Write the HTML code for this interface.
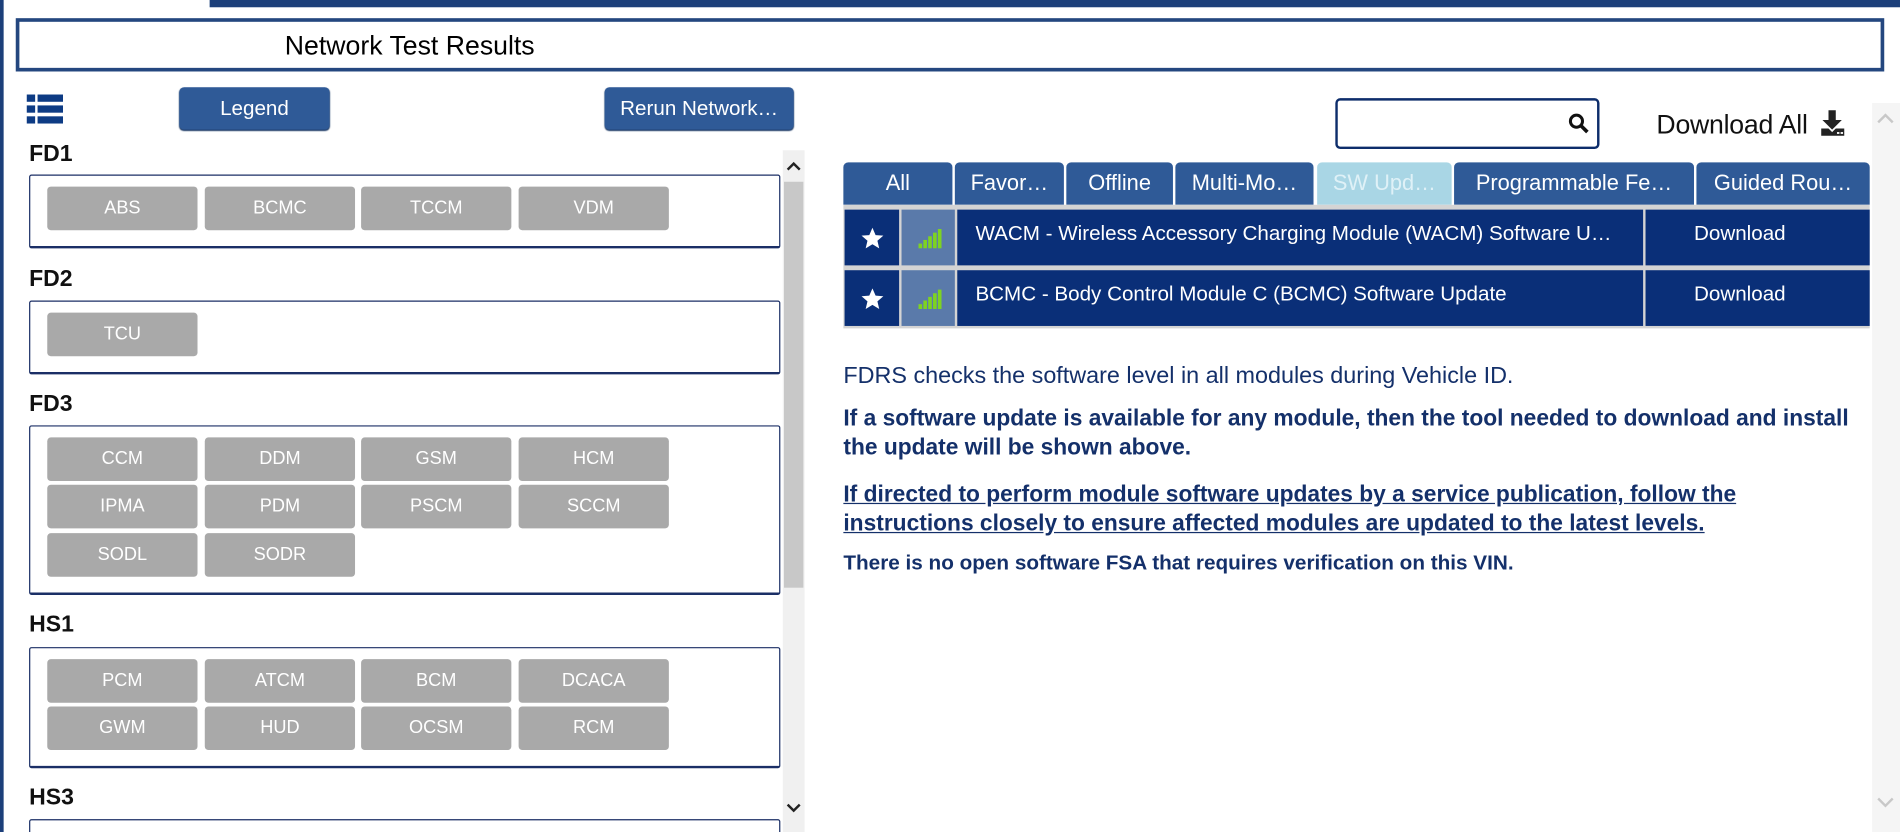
<!DOCTYPE html>
<html><head><meta charset="utf-8"><style>
html,body{margin:0;padding:0;width:1900px;height:832px;overflow:hidden;background:#fff}
#w{position:absolute;left:0;top:0;width:1568px;height:687px;transform:scale(1.21173);transform-origin:0 0;font-family:"Liberation Sans",Arial,sans-serif;overflow:hidden}
.a{position:absolute}
.btn{position:absolute;background:#2f5a97;color:#fff;border-radius:4px;font-size:17px;text-align:center;line-height:36px;height:35px;box-shadow:0 1px 1px #1c3a66;white-space:nowrap}
.h{position:absolute;left:24px;font-weight:bold;font-size:19px;color:#111}
.box{position:absolute;left:24px;width:618px;border:1px solid #1b2f66;border-bottom:2px solid #1b2f66;border-radius:2px}
.m{position:absolute;width:124px;height:36px;background:#a9a9a9;color:#fff;border-radius:3px;font-size:15px;text-align:center;line-height:36px}
.tab{position:absolute;top:134px;height:35px;background:#2f5a97;color:#fff;font-size:18px;line-height:35px;text-align:center;border-radius:4px 4px 0 0;white-space:nowrap;overflow:hidden}
.c{position:absolute;background:#0a2f78;color:#fff;font-size:17px}
.t{position:absolute;left:696px;color:#14306a;white-space:nowrap}
</style></head><body><div id="w">
<div class="a" style="left:0;top:0;width:3px;height:687px;background:#1c3f7a"></div>
<div class="a" style="left:173px;top:0;width:1395px;height:6px;background:#1c3f7a"></div>
<div class="a" style="left:13px;top:15px;width:1536px;height:38px;border:3px solid #24477f;background:#fff"></div>
<div class="a" style="left:235px;top:25px;font-size:22px;color:#000">Network Test Results</div>
<svg class="a" style="left:22px;top:78px" width="30" height="24"><g fill="#0d3b84"><rect x="0" y="0" width="7" height="6"/><rect x="9" y="0" width="21" height="6"/><rect x="0" y="9" width="7" height="6"/><rect x="9" y="9" width="21" height="6"/><rect x="0" y="18" width="7" height="6"/><rect x="9" y="18" width="21" height="6"/></g></svg>
<div class="btn" style="left:148px;top:72px;width:124px">Legend</div>
<div class="btn" style="left:499px;top:72px;width:156px">Rerun Network…</div>
<div class="a" style="left:646px;top:124px;width:18px;height:563px;background:#f0f0f0"></div>
<div class="a" style="left:647px;top:150px;width:16px;height:335px;background:#c8c8c8"></div>
<svg class="a" style="left:648px;top:662px" width="14" height="10"><path d="M2 2 L7 7 L12 2" stroke="#222" stroke-width="2" fill="none"/></svg>
<svg class="a" style="left:648px;top:132px" width="14" height="10"><path d="M2 8 L7 3 L12 8" stroke="#222" stroke-width="2" fill="none"/></svg>

<div class="h" style="top:117px">FD1</div>
<div class="box" style="top:144px;height:58px"></div>
<div class="m" style="left:39px;top:154px">ABS</div><div class="m" style="left:169px;top:154px">BCMC</div><div class="m" style="left:298px;top:154px">TCCM</div><div class="m" style="left:428px;top:154px">VDM</div>
<div class="h" style="top:220px">FD2</div>
<div class="box" style="top:248px;height:58px"></div>
<div class="m" style="left:39px;top:258px">TCU</div>
<div class="h" style="top:323px">FD3</div>
<div class="box" style="top:351px;height:137px"></div>
<div class="m" style="left:39px;top:361px">CCM</div><div class="m" style="left:169px;top:361px">DDM</div><div class="m" style="left:298px;top:361px">GSM</div><div class="m" style="left:428px;top:361px">HCM</div>
<div class="m" style="left:39px;top:400px">IPMA</div><div class="m" style="left:169px;top:400px">PDM</div><div class="m" style="left:298px;top:400px">PSCM</div><div class="m" style="left:428px;top:400px">SCCM</div>
<div class="m" style="left:39px;top:440px">SODL</div><div class="m" style="left:169px;top:440px">SODR</div>
<div class="h" style="top:505px">HS1</div>
<div class="box" style="top:534px;height:97px"></div>
<div class="m" style="left:39px;top:544px">PCM</div><div class="m" style="left:169px;top:544px">ATCM</div><div class="m" style="left:298px;top:544px">BCM</div><div class="m" style="left:428px;top:544px">DCACA</div>
<div class="m" style="left:39px;top:583px">GWM</div><div class="m" style="left:169px;top:583px">HUD</div><div class="m" style="left:298px;top:583px">OCSM</div><div class="m" style="left:428px;top:583px">RCM</div>
<div class="h" style="top:648px">HS3</div>
<div class="box" style="top:676px;height:30px"></div>

<div class="a" style="left:1102px;top:81px;width:214px;height:38px;border:2px solid #0d2d6b;border-radius:4px"></div>
<svg class="a" style="left:1294px;top:93px" width="18" height="18"><circle cx="7" cy="7" r="5" stroke="#111" stroke-width="2.5" fill="none"/><path d="M11 11 L16 16" stroke="#111" stroke-width="3"/></svg>
<div class="a" style="left:1367px;top:90px;font-size:22px;color:#111;letter-spacing:-0.2px">Download All</div>
<svg class="a" style="left:1501px;top:90px" width="24" height="24"><path d="M8 1h6v8h5l-8 8-8-8h5z" fill="#222"/><path d="M2 16h6l3 3 3-3h7v6H2z" fill="#222"/><rect x="15" y="19" width="2" height="1.5" fill="#fff"/><rect x="18" y="19" width="2" height="1.5" fill="#fff"/></svg>
<div class="a" style="left:1545px;top:85px;width:23px;height:602px;background:#f5f5f5"></div>
<svg class="a" style="left:1548px;top:91px" width="16" height="12"><path d="M2 10 L8 4 L14 10" stroke="#c8c8c8" stroke-width="2" fill="none"/></svg>
<svg class="a" style="left:1548px;top:656px" width="16" height="12"><path d="M2 3 L8 9 L14 3" stroke="#c8c8c8" stroke-width="2" fill="none"/></svg>

<div class="tab" style="left:696px;width:90px">All</div>
<div class="tab" style="left:788px;width:90px">Favor…</div>
<div class="tab" style="left:880px;width:88px">Offline</div>
<div class="tab" style="left:970px;width:114px">Multi-Mo…</div>
<div class="tab" style="left:1087px;width:111px;background:#a9d6e5;color:#dff1f7">SW Upd…</div>
<div class="tab" style="left:1200px;width:198px">Programmable Fe…</div>
<div class="tab" style="left:1400px;width:143px">Guided Rou…</div>
<div class="a" style="left:696px;top:169px;width:847px;height:102px;background:#d4d4d4"></div>

<div class="c" style="left:697px;top:173px;width:45px;height:46px"></div>
<div class="c" style="left:744px;top:173px;width:44px;height:46px;background:#5a7aaa"></div>
<div class="c" style="left:790px;top:173px;width:566px;height:46px;line-height:40px;padding-left:15px;box-sizing:border-box;white-space:nowrap;overflow:hidden">WACM - Wireless Accessory Charging Module (WACM) Software U…</div>
<div class="c" style="left:1358px;top:173px;width:185px;height:46px;line-height:40px;padding-left:40px;box-sizing:border-box">Download</div>
<div class="c" style="left:697px;top:223px;width:45px;height:46px"></div>
<div class="c" style="left:744px;top:223px;width:44px;height:46px;background:#5a7aaa"></div>
<div class="c" style="left:790px;top:223px;width:566px;height:46px;line-height:40px;padding-left:15px;box-sizing:border-box">BCMC - Body Control Module C (BCMC) Software Update</div>
<div class="c" style="left:1358px;top:223px;width:185px;height:46px;line-height:40px;padding-left:40px;box-sizing:border-box">Download</div>
<svg class="a" style="left:710px;top:187px" width="20" height="19"><path d="M10 1l2.6 6 6.4.5-4.9 4.2 1.5 6.3L10 14.6 4.4 18l1.5-6.3L1 7.5l6.4-.5z" fill="#fff"/></svg>
<svg class="a" style="left:710px;top:237px" width="20" height="19"><path d="M10 1l2.6 6 6.4.5-4.9 4.2 1.5 6.3L10 14.6 4.4 18l1.5-6.3L1 7.5l6.4-.5z" fill="#fff"/></svg>
<svg class="a" style="left:758px;top:187px" width="22" height="18"><g fill="#7ed321"><rect x="0" y="14" width="3" height="4"/><rect x="4" y="11" width="3" height="7"/><rect x="8" y="8" width="3" height="10"/><rect x="12" y="5" width="3" height="13"/><rect x="16" y="2" width="3" height="16"/></g></svg>
<svg class="a" style="left:758px;top:237px" width="22" height="18"><g fill="#7ed321"><rect x="0" y="14" width="3" height="4"/><rect x="4" y="11" width="3" height="7"/><rect x="8" y="8" width="3" height="10"/><rect x="12" y="5" width="3" height="13"/><rect x="16" y="2" width="3" height="16"/></g></svg>

<div class="t" style="top:300px;font-size:19.3px">FDRS checks the software level in all modules during Vehicle ID.</div>
<div class="t" style="top:333px;font-size:18.8px;font-weight:bold;line-height:24px">If a software update is available for any module, then the tool needed to download and install<br>the update will be shown above.</div>
<div class="t" style="top:396px;font-size:18.8px;font-weight:bold;line-height:24px;text-decoration:underline">If directed to perform module software updates by a service publication, follow the<br>instructions closely to ensure affected modules are updated to the latest levels.</div>
<div class="t" style="top:455px;font-size:17.1px;font-weight:bold">There is no open software FSA that requires verification on this VIN.</div>
</div></body></html>
